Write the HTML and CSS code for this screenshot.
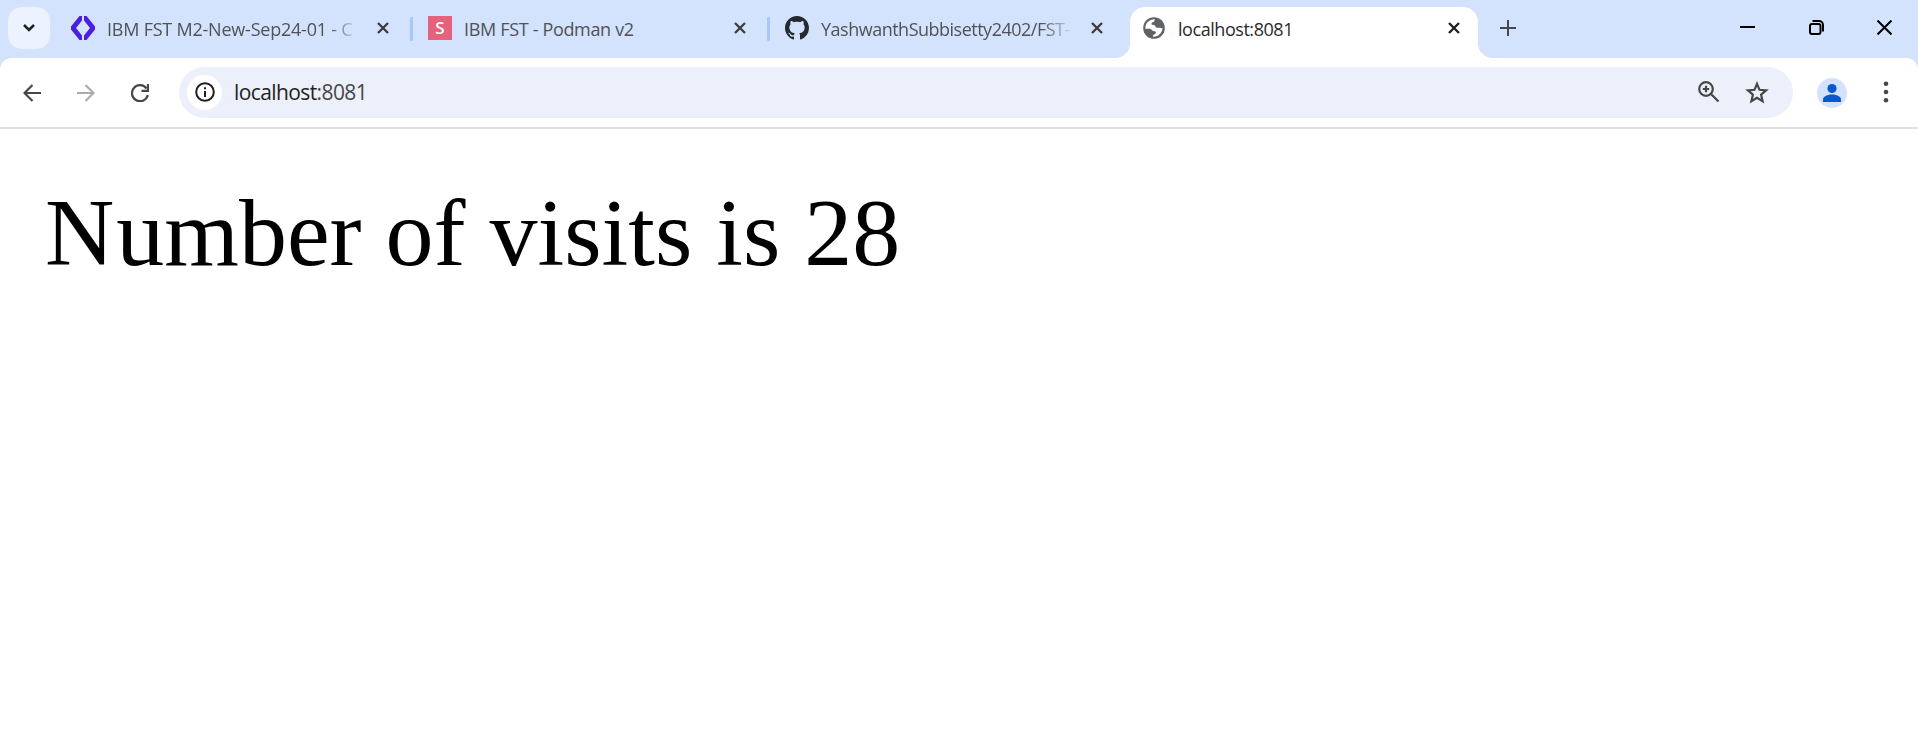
FILE: index.html
```
<!DOCTYPE html>
<html lang="en">
<head>
<meta charset="utf-8">
<title>localhost:8081</title>
<link rel="stylesheet" href="styles.css">
</head>
<body>
<div class="strip">
  <button class="tab-search" aria-label="Search tabs"><svg width="14" height="10" viewBox="0 0 14 10"><path d="M2 2l5 5 5-5" fill="none" stroke="#1f1f1f" stroke-width="2.5"/></svg></button>
  <div class="tab">
    <svg class="favicon" viewBox="0 0 24 24"><path d="M8.500 0H11v4.500L5 12l6 7.500V24H8.500L0 13.500v-3zM15.500 0H13v4.500L19 12l-6 7.500V24h2.500L24 13.500v-3z" fill="#4a1fe0"/></svg>
    <span class="title fade t1">IBM FST M2-New-Sep24-01 - C</span>
    <svg class="close" viewBox="0 0 12 12"><path d="M1 1l10 10M11 1L1 11"/></svg>
    <span class="sep"></span>
  </div>
  <div class="tab">
    <span class="favicon s-icon">S</span>
    <span class="title t2">IBM FST - Podman v2</span>
    <svg class="close" viewBox="0 0 12 12"><path d="M1 1l10 10M11 1L1 11"/></svg>
    <span class="sep"></span>
  </div>
  <div class="tab">
    <svg class="favicon" viewBox="0 0 16 16"><path fill="#24292f" d="M8 0C3.580 0 0 3.580 0 8c0 3.540 2.290 6.530 5.470 7.590.4.070.55-.17.55-.38 0-.19-.01-.82-.01-1.490-2.010.37-2.530-.49-2.690-.94-.09-.23-.48-.94-.82-1.130-.28-.15-.68-.52-.01-.53.63-.01 1.080.58 1.230.82.72 1.210 1.870.87 2.330.66.07-.52.28-.87.51-1.070-1.780-.2-3.640-.89-3.640-3.950 0-.87.31-1.590.82-2.150-.08-.2-.36-1.020.08-2.120 0 0 .67-.21 2.200.82.64-.18 1.320-.27 2-.27s1.360.09 2 .27c1.530-1.040 2.200-.82 2.200-.82.44 1.100.16 1.920.08 2.120.51.56.82 1.270.82 2.150 0 3.070-1.870 3.750-3.650 3.950.29.25.54.73.54 1.480 0 1.070-.01 1.930-.01 2.200 0 .21.15.46.55.38A8.010 8.010 0 0 0 16 8c0-4.420-3.580-8-8-8z"/></svg>
    <span class="title fade t3">YashwanthSubbisetty2402/FST-</span>
    <svg class="close" viewBox="0 0 12 12"><path d="M1 1l10 10M11 1L1 11"/></svg>
  </div>
  <div class="tab active">
    <svg class="favicon" viewBox="0 0 24 24"><circle cx="12" cy="12" r="10.800" fill="#5f6368"/><path fill="#fff" d="M13 3.300c-.8 1-.2 1.800-1.300 2.500-1.200.8-2.200.8-2.200 2 0 1.100 1 1.200 2.200 1.100 1.600-.1 1.600 2 2.600 2.600 1.500.8 3.200-.4 4.600.5.7.5 1.200.4 1.700.1-.3 4-3.300 7.700-7.100 8.500l-2.600.1c0-1.300.7-2.200 2-2.600 1.100-.4 1.300-1.900.4-2.500-1-.7-2.600-.3-3.300-1.300-.8-1.200-1.800-1.500-3.100-1.500H3.400A8.700 8.700 0 0 1 13 3.300z"/></svg>
    <span class="title t4">localhost:8081</span>
    <svg class="close" viewBox="0 0 12 12"><path d="M1 1l10 10M11 1L1 11"/></svg>
  </div>
  <svg class="plus" viewBox="0 0 16 16"><path d="M8 0v16M0 8h16"/></svg>
  <div class="window-controls">
    <svg width="15" height="15" viewBox="0 0 15 15"><path d="M0 7h15"/></svg>
    <svg width="15" height="15" viewBox="0 0 15 15"><rect x="1" y="4" width="10.500" height="10" rx="2"/><path d="M3.500 1H10a4 4 0 0 1 4 4v6.500"/></svg>
    <svg width="15" height="15" viewBox="0 0 15 15"><path d="M.5.5l14 14M14.500.5l-14 14"/></svg>
  </div>
</div>
<div class="toolbar-back">
  <div class="toolbar">
    <svg class="nav" viewBox="0 0 18 18"><path d="M18 9H1.500M9.500 1L1.500 9l8 8"/></svg>
    <svg class="nav disabled" viewBox="0 0 18 18"><path d="M0 9h16.500M8.500 1l8 8-8 8"/></svg>
    <svg class="nav" viewBox="0 0 18 18"><path d="M15.500 4.500A8 8 0 1 0 16.800 11M17 0v6.800h-6.500"/></svg>
    <div class="omnibox">
      <span class="site-info"><svg width="20" height="20" viewBox="0 0 20 20"><circle cx="10" cy="10" r="8.800" fill="none" stroke="#1f1f1f" stroke-width="2"/><path d="M10 9v6M10 5.200v2" stroke="#1f1f1f" stroke-width="2"/></svg></span>
      <span class="url">localhost<span class="port">:8081</span></span>
      <svg class="zoom" viewBox="0 0 22 22"><circle cx="8" cy="8" r="6.800"/><path d="M13 13l7.500 7.500M8 4.800v6.400M4.800 8h6.400"/></svg>
      <svg class="star" viewBox="0 0 24 23"><path d="M12 2.800l2.500 6 6.600.6-5 4.300 1.500 6.500-5.600-3.500-5.600 3.500 1.500-6.500-5-4.300 6.600-.6z"/></svg>
    </div>
    <svg class="avatar" viewBox="0 0 30 30"><circle cx="15" cy="15" r="15" fill="#d3e3fd"/><circle cx="15" cy="10.500" r="4.600" fill="#0b57d0"/><path d="M6 24v-2.500c0-3.300 5-5 9-5s9 1.700 9 5V24z" fill="#0b57d0"/></svg>
    <svg class="menu" viewBox="0 0 6 22"><circle cx="3" cy="2.700" r="2.300"/><circle cx="3" cy="11" r="2.300"/><circle cx="3" cy="19.300" r="2.300"/></svg>
  </div>
</div>
<main class="page"><span class="initial">N</span>umber of visits is 28</main>
</body>
</html>
```
FILE: styles.css
```
body {
  margin: 0;
  background: #fff;
  font-family: "Open Sans", "Noto Sans", sans-serif;
}
svg { display: block; flex: none; }
.strip {
  display: flex;
  height: 58px;
  box-sizing: border-box;
  padding: 7px 26px 0 8px;
  background: #d3e2fd;
}
.tab-search {
  display: flex;
  align-items: center;
  justify-content: center;
  width: 42px;
  height: 42px;
  margin-right: 6px;
  padding: 0;
  border: 0;
  border-radius: 14px;
  background: #ecf2fe;
}
.tab {
  display: flex;
  align-items: center;
  box-sizing: border-box;
  width: 357px;
  height: 42px;
  padding-left: 15px;
}
.favicon { flex: none; width: 24px; height: 24px; margin-right: 12px; }
.s-icon {
  background: #e6627c;
  color: #fff;
  font-size: 17px;
  font-weight: 600;
  line-height: 24px;
  text-align: center;
}
.title {
  flex: none;
  width: 251px;
  overflow: hidden;
  white-space: nowrap;
  font-size: 18px;
  line-height: 26px;
  padding-top: 2px;
  color: #505255;
}
.t1 { letter-spacing: -0.22px; }
.t2 { letter-spacing: -0.33px; }
.t3 { letter-spacing: -0.5px; }
.t4 { letter-spacing: -0.45px; }
.fade {
  -webkit-mask-image: linear-gradient(90deg, #000 220px, transparent 253px);
  mask-image: linear-gradient(90deg, #000 220px, transparent 253px);
}
.close {
  width: 12px;
  height: 12px;
  margin: 0 21px 0 19px;
  fill: none;
  stroke: #3c3c3c;
  stroke-width: 2.300;
}
.sep { width: 3px; height: 24px; margin-top: 2px; border-radius: 1px; background: #a8c7fa; }
.active {
  position: relative;
  width: 348px;
  height: 51px;
  margin-left: 3px;
  padding: 0 0 9px 12px;
  border-radius: 15px 15px 0 0;
  background: #fff;
}
.active .title { color: #2a2a2a; }
.active .close { stroke: #1f1f1f; }
.active::before, .active::after {
  content: "";
  position: absolute;
  bottom: 0;
  width: 15px;
  height: 15px;
}
.active::before { left: -15px; background: radial-gradient(circle at 0 0, transparent 14.500px, #fff 15.500px); }
.active::after { right: -15px; background: radial-gradient(circle at 100% 0, transparent 14.500px, #fff 15.500px); }
.plus { width: 16px; height: 16px; margin: 13px 0 0 22px; stroke: #474747; stroke-width: 2; }
.window-controls {
  display: flex;
  gap: 53.500px;
  margin: 13px 0 0 auto;
  fill: none;
  stroke: #000;
  stroke-width: 2;
}
.toolbar-back { background: #d3e2fd; }
.toolbar {
  display: flex;
  align-items: center;
  height: 71px;
  box-sizing: border-box;
  padding: 0 29px 0 23px;
  border-bottom: 2px solid #e1e3e1;
  background: radial-gradient(circle at 12px 12px, #fff 11.500px, transparent 12.500px) 0 0 / 12px 12px no-repeat,
    radial-gradient(circle at 0 12px, #fff 11.500px, transparent 12.500px) 100% 0 / 12px 12px no-repeat,
    linear-gradient(#fff, #fff) 12px 0 / calc(100% - 24px) 12px no-repeat,
    linear-gradient(#fff, #fff) 0 12px no-repeat;
}
.nav { width: 18px; height: 18px; margin: 0 36px 0 0; fill: none; stroke: #474747; stroke-width: 2.200; }
.nav:nth-of-type(3) { margin-right: 30px; }
.disabled { stroke: #ababab; }
.omnibox {
  display: flex;
  align-items: center;
  flex: 1;
  height: 51px;
  box-sizing: border-box;
  padding: 0 24px 0 8px;
  border-radius: 26px;
  background: #ecf0fa;
}
.site-info {
  display: flex;
  align-items: center;
  justify-content: center;
  width: 35px;
  height: 35px;
  margin: -1px 12px 0 0;
  border-radius: 50%;
  background: #fff;
}
.url { font-size: 21px; line-height: 28px; margin-top: -1px; letter-spacing: -0.6px; color: #1f1f1f; }
.port { color: #474747; }
.zoom { width: 22px; height: 22px; margin: -1px 0 0 auto; fill: none; stroke: #474747; stroke-width: 2.200; }
.star { width: 24px; height: 23px; margin: -1px 0 0 25px; fill: none; stroke: #474747; stroke-width: 2.200; }
.avatar { width: 30px; height: 30px; margin: 0 0 0 24px; }
.menu { width: 6px; height: 22px; margin: -1px 0 0 36px; fill: #474747; }
.page {
  padding: 49px 48px 48px 47px;
  font-family: "Liberation Serif", "Times New Roman", serif;
  font-size: 96px;
  line-height: 110px;
  color: #000;
}
.initial { margin-left: -2px; letter-spacing: 2px; }
```
